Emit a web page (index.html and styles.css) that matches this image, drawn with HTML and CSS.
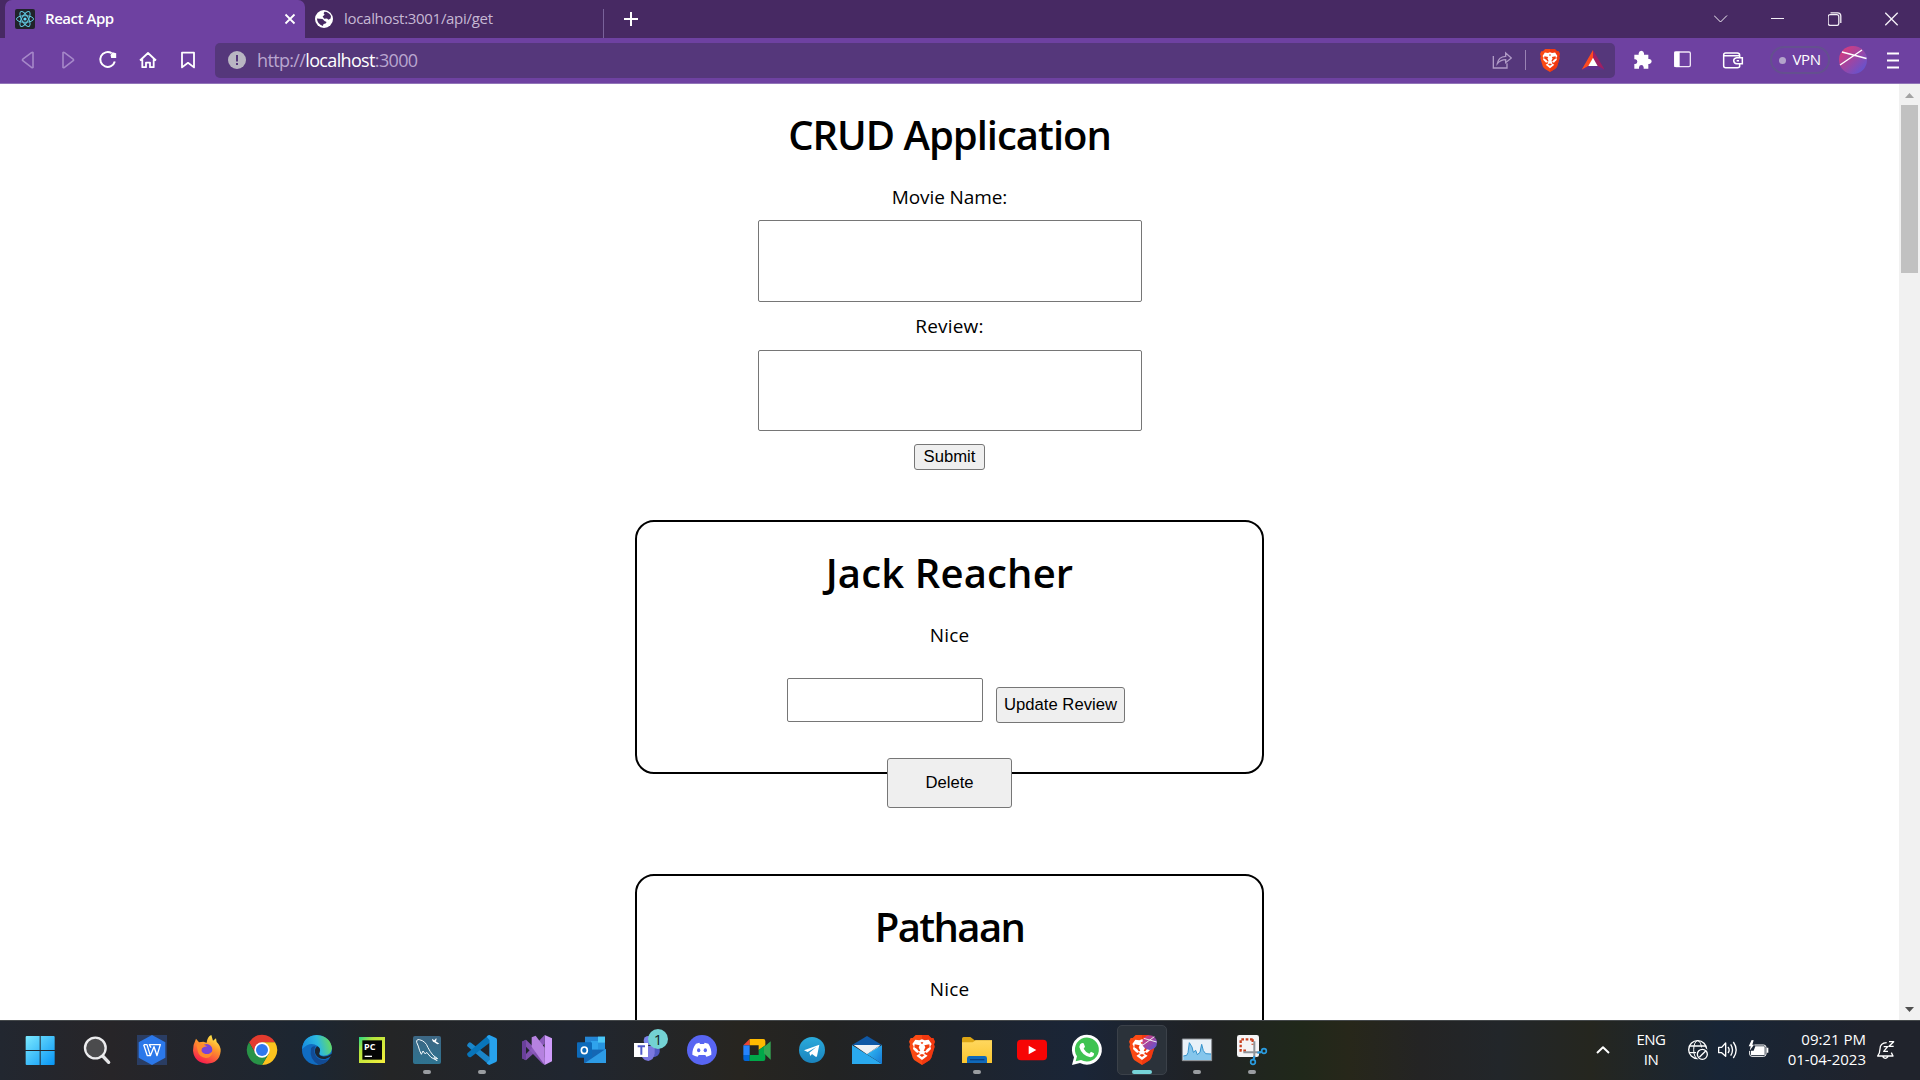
FILE: index.html
```html
<!DOCTYPE html>
<html lang="en">
<head>
<meta charset="utf-8">
<title>React App</title>
<link rel="stylesheet" href="styles.css">
</head>
<body>
<svg width="0" height="0" class="defs" aria-hidden="true">
  <defs>
    <symbol id="lion" viewBox="0 0 78 90">
      <path d="M20 0H58L67 9L73 9L78 20L75 28L77 35L67 68Q64 75 57 79L39 90L21 79Q14 75 11 68L1 35L3 28L0 20L5 9L11 9Z" fill="#fb4a14"/>
      <path d="M39 0H58L67 9L73 9L78 20L75 28L77 35L67 68Q64 75 57 79L39 90Z" fill="#ea2a0c" opacity=".55"/>
      <path d="M19 14L31 16L39 13L47 16L59 14L68 27L64 34L66 42L57 51L55 55L48 51L46 56L56 62L39 75L22 62L32 56L30 51L23 55L21 51L12 42L14 34L10 27Z" fill="#fff"/>
      <path d="M17 28L32 31L29 37L34 48L29 49L24 42L16 37ZM61 28L46 31L49 37L44 48L49 49L54 42L62 37ZM35 22H43L41 26H37ZM31 60L39 57L47 60L39 66ZM22 51L27 56L21 62ZM56 51L51 56L57 62Z" fill="#f23f10"/>
    </symbol>
    <linearGradient id="win" x1="0" y1="0" x2="1" y2="1"><stop offset="0" stop-color="#7be9ff"/><stop offset="1" stop-color="#0795f5"/></linearGradient>
    <linearGradient id="fox" x1=".8" y1="0" x2=".3" y2="1"><stop offset="0" stop-color="#fff44f"/><stop offset=".4" stop-color="#ff9a2b"/><stop offset="1" stop-color="#f7174e"/></linearGradient>
    <linearGradient id="edge" x1="0" y1=".6" x2="1" y2=".4"><stop offset="0" stop-color="#168be0"/><stop offset=".55" stop-color="#2cb8df"/><stop offset="1" stop-color="#69dc5a"/></linearGradient>
    <linearGradient id="pc" x1="0" y1="0" x2="1" y2="1"><stop offset="0" stop-color="#23d789"/><stop offset=".3" stop-color="#b6e53c"/><stop offset="1" stop-color="#f7ef3d"/></linearGradient>
    <linearGradient id="sql" x1="0" y1="0" x2="0" y2="1"><stop offset="0" stop-color="#3d6784"/><stop offset="1" stop-color="#2f7390"/></linearGradient>
    <linearGradient id="tg" x1="0" y1="0" x2="0" y2="1"><stop offset="0" stop-color="#2aabdc"/><stop offset="1" stop-color="#1a83bd"/></linearGradient>
    <linearGradient id="sky" x1="0" y1="0" x2="1" y2="1"><stop offset="0" stop-color="#36c6fb"/><stop offset="1" stop-color="#1577d3"/></linearGradient>
    <linearGradient id="orb" x1="0" y1="0" x2="1" y2="1"><stop offset="0" stop-color="#e83a72"/><stop offset=".45" stop-color="#a4449f"/><stop offset="1" stop-color="#5158dc"/></linearGradient>
    <linearGradient id="fold" x1="0" y1="0" x2="0" y2="1"><stop offset="0" stop-color="#ffd75e"/><stop offset="1" stop-color="#fbc62f"/></linearGradient>
  </defs>
</svg>

<header class="browser">
  <div class="tabstrip">
    <div class="tab tab-active">
      <svg class="favicon" width="20" height="20" viewBox="0 0 20 20"><rect width="20" height="20" rx="2" fill="#20232a"/><g fill="none" stroke="#61c9e0" stroke-width="1"><ellipse cx="10" cy="10" rx="8.5" ry="3.3"/><ellipse cx="10" cy="10" rx="8.5" ry="3.3" transform="rotate(60 10 10)"/><ellipse cx="10" cy="10" rx="8.5" ry="3.3" transform="rotate(120 10 10)"/></g><circle cx="10" cy="10" r="1.6" fill="#61dafb"/></svg>
      <span class="tab-title">React App</span>
      <svg class="tab-close" width="12" height="12" viewBox="0 0 12 12"><path d="M1.5 1.5L10.5 10.5M10.5 1.5L1.5 10.5" stroke="#fff" stroke-width="1.8"/></svg>
    </div>
    <div class="tab tab-idle">
      <svg class="favicon" width="18" height="18" viewBox="0 0 18 18"><circle cx="9" cy="9" r="9" fill="#fff"/><path d="M9.5 1.8Q14 2 16 6L15.6 8.5L13.5 9.8L12 8.5L9.2 8.8L7.6 6.6L9.6 4.8L8.6 3.2ZM1.9 8.6L7.5 9L9.5 11L11.6 12L10.6 13.6L8.6 14L7.8 16Q2.4 14.4 1.9 8.6Z" fill="#472963"/></svg>
      <span class="tab-title">localhost:3001/api/get</span>
    </div>
    <svg class="new-tab" width="16" height="16" viewBox="0 0 16 16"><path d="M8 1V15M1 8H15" stroke="#fff" stroke-width="2"/></svg>
    <div class="window-controls">
      <svg width="14" height="14" viewBox="0 0 14 14"><path d="M.5 3.5L7 10L13.5 3.5" stroke-width="1"/></svg>
      <svg width="14" height="14" viewBox="0 0 14 14"><path d="M.5 6.5H13.5" stroke-width="1"/></svg>
      <svg width="14" height="14" viewBox="0 0 14 14"><rect x=".6" y="2.7" width="10.7" height="10.7" rx="2"/><path d="M3 .8H10Q13.3.8 13.3 4V11"/></svg>
      <svg width="14" height="14" viewBox="0 0 14 14"><path d="M.8.8L13.2 13.2M13.2.8L.8 13.2"/></svg>
    </div>
  </div>

  <div class="toolbar">
    <nav class="nav-buttons">
      <svg width="20" height="20" viewBox="0 0 20 20" class="dim"><path d="M15 2.5V17.5Q14.5 18 13.5 17.3L4.8 10.6Q4 10 4.8 9.2L13.5 2.7Q14.5 2 15 2.5Z"/></svg>
      <svg width="20" height="20" viewBox="0 0 20 20" class="dim"><path d="M5 2.5V17.5Q5.5 18 6.5 17.3L15.2 10.6Q16 10 15.2 9.2L6.5 2.7Q5.500 2 5 2.500Z"/></svg>
      <svg width="20" height="20" viewBox="0 0 20 20"><path d="M13.600 3.200A7.400 7.400 0 1 0 16.800 11.500" stroke-width="2"/><path d="M14.500 2.200L18.200 3.200V8H13.200L12.500 5Z" fill="#fff" stroke="none"/></svg>
      <svg width="20" height="20" viewBox="0 0 20 20"><path d="M2 10.500L10 3L18 10.500M4.300 9.200V17.200H8V12.600H12V17.200H15.700V9.200" stroke-width="1.800"/></svg>
      <svg width="20" height="20" viewBox="0 0 20 20"><path d="M4 2.600H16V17.400L10 12.800L4 17.400Z" stroke-width="1.800"/></svg>
    </nav>
    <div class="address">
      <svg width="18" height="18" viewBox="0 0 18 18"><circle cx="9" cy="9" r="9" fill="#b9b6c2"/><path d="M9 4V10.500M9 12V14" stroke="#55377b" stroke-width="2"/></svg>
      <span class="url">http://<b>localhost</b>:3000</span>
      <svg class="share" width="20" height="20" viewBox="154 152 60 60"><path d="M158 170V206H199V192M170 193Q173 172 195 171V161L212 176L195 190V181Q180 181 170 193Z" fill="none" stroke="#b09bc6" stroke-width="4"/></svg>
      <span class="divider"></span>
      <svg class="shield" width="20" height="23"><use href="#lion"/></svg>
      <svg class="bat" width="24" height="20" viewBox="423 152 72 60"><path d="M459 152L459 177L446 200L425 211Z" fill="#ff4a1f"/><path d="M459 152L494 211L472 200L459 177Z" fill="#9e1f63"/><path d="M425 211L446 199H472L494 211Z" fill="#662d91" opacity=".75"/><path d="M459 175L473 200H445Z" fill="#fff"/></svg>
    </div>
    <svg class="puzzle" width="20" height="20" viewBox="579 151 60 60"><path d="M583 165H596V161Q597 153 604 153Q611 153 612 161V165H625V178H628Q635 179 635 185Q635 192 628 193H625V207H611V203Q610 196 604 196Q598 196 597 203V207H583V193H586Q592 192 592 186Q592 180 586 179H583Z" fill="#fff"/></svg>
    <svg class="sidebar" width="20" height="20" viewBox="699 152 60 60"><rect x="704" y="158" width="47" height="44" rx="4" fill="none" stroke="#eee4f5" stroke-width="4"/><path d="M703 157H719V203H703Z" fill="#fff"/></svg>
    <svg class="wallet" width="22" height="20" viewBox="846 152 66 60"><path d="M899 173V168Q899 161 892 161H857Q851 161 851 167V199Q851 205 857 205H892Q899 205 899 201V194M852 169H897M907 175H890Q881 176 881 184Q882 193 890 193H907ZM890 184H897" fill="none" stroke="#fff" stroke-width="4.500"/></svg>
    <div class="vpn"><i></i><span>VPN</span></div>
    <svg class="avatar" width="28" height="28" viewBox="0 0 28 28"><circle cx="14" cy="14" r="14" fill="url(#orb)"/><path d="M1 19L23 4M3 6L27.500 12.500" stroke="#fff" stroke-width="1.400"/></svg>
    <svg class="menu" width="12" height="17" viewBox="0 0 12 17"><path d="M0 1.500H12M0 8.500H12M0 15.500H12" stroke="#fff" stroke-width="1.800"/></svg>
  </div>
</header>

<div class="viewport">
  <main class="app">
    <h1 class="app-title">CRUD Application</h1>
    <label class="label-movie" for="movie">Movie Name:</label>
    <input class="field field-movie" id="movie" type="text">
    <label class="label-review" for="review">Review:</label>
    <input class="field field-review" id="review" type="text">
    <button class="submit">Submit</button>

    <section class="card">
      <h1 class="name-jack">Jack Reacher</h1>
      <p>Nice</p>
      <div class="update-row"><input type="text" aria-label="New review"><button>Update Review</button></div>
      <button class="delete">Delete</button>
    </section>
    <section class="card">
      <h1 class="name-pathaan">Pathaan</h1>
      <p>Nice</p>
    </section>
  </main>
  <div class="scrollbar">
    <svg width="9" height="5" viewBox="0 0 9 5"><path d="M4.500 0L9 5H0Z" fill="#a3a3a3"/></svg>
    <div class="thumb"></div>
    <svg width="9" height="5" viewBox="0 0 9 5"><path d="M4.500 5L9 0H0Z" fill="#505050"/></svg>
  </div>
</div>

<footer class="taskbar">
  <div class="apps">
    <div class="slot start"><svg viewBox="76 75 90 90"><path d="M78 81Q78 78 81 78H120V120H78ZM123 78H162Q165 78 165 81V120H123ZM78 123H120V165H81Q78 165 78 162ZM123 123H165V162Q165 165 162 165H123Z" fill="url(#win)"/></svg></div>
    <div class="slot"><svg viewBox="246 75 90 90"><path d="M308 138L326 157" stroke="#e4e4e6" stroke-width="10" stroke-linecap="round"/><circle cx="286" cy="114" r="31" fill="#4b4b4d" stroke="#ececee" stroke-width="7"/></svg></div>
    <div class="slot"><svg viewBox="411 75 90 90"><path d="M411 75H501V165H411Z" fill="#2a3d63"/><path d="M456 75L496 97V143L456 165L416 143V97Z" fill="#2b78ea"/><path d="M431 104H441L451 137L462 110L471 137L481 104H448L453 113M431 104L442 137H451" fill="none" stroke="#fff" stroke-width="4" stroke-linejoin="round"/></svg></div>
    <div class="slot"><svg viewBox="576 75 90 90"><path d="M588 86L597 97L610 95L620 98Q622 80 634 75L639 92L648 85L650 96Q663 108 662 124Q658 160 621 161Q583 158 579 122Q579 103 588 86Z" fill="url(#fox)"/><circle cx="620" cy="119" r="17" fill="#7a43d8"/><path d="M589 103Q600 100 613 105L622 109Q610 111 606 115Q600 128 616 132Q630 134 638 122Q637 142 618 144Q598 141 594 126Z" fill="#ff8a2c"/></svg></div>
    <div class="slot"><svg viewBox="741 75 90 90"><path d="M747 97A45 45 0 0 1 825 97H786L767 131Z" fill="#e33b2e"/><path d="M825 97A45 45 0 0 1 786 165L806 131L786 97Z" fill="#fcc31e"/><path d="M747 97A45 45 0 0 0 786 165L806 131L767 131Z" fill="#289347"/><circle cx="786" cy="120" r="23" fill="#fff"/><circle cx="786" cy="120" r="18" fill="#2f78ee"/></svg></div>
    <div class="slot"><svg viewBox="906 75 90 90"><circle cx="951" cy="120" r="45" fill="#106cc1"/><path d="M906 118Q909 78 950 75Q992 78 996 116Q992 137 970 137Q953 136 959 126Q963 115 953 108Q930 92 906 118Z" fill="url(#edge)"/><path d="M933 115Q927 150 956 164Q976 164 988 147Q960 156 948 139Q939 126 946 109Q937 107 933 115Z" fill="#124b94"/><path d="M951 109Q940 120 948 135Q957 149 976 147Q990 142 998 134L998 130Q981 142 967 139Q954 136 959 126Q964 115 951 109Z" fill="#1c2632"/></svg></div>
    <div class="slot"><svg viewBox="1071 75 90 90"><path d="M1077 81H1155V159H1077Z" fill="url(#pc)"/><path d="M1087 91H1146V149H1087Z" fill="#050505"/><path d="M1094 139H1116" stroke="#fff" stroke-width="4"/><text x="1092" y="119" class="pc-text">PC</text></svg></div>
    <div class="slot running"><svg viewBox="36 75 90 90"><rect x="39" y="78" width="84" height="84" rx="6" fill="url(#sql)"/><path d="M64 133L59 122Q55 107 50 97Q49 87 58 89Q77 93 84 113L91 125Q96 136 113 146L102 143L112 153M64 133L69 123L76 132L80 127Q91 145 110 151" fill="none" stroke="#f5fafc" stroke-width="3"/><path d="M96 86L103 91L109 84Q111 91 107 94L118 101L112 103L103 97Q97 96 96 86Z" fill="#fff"/></svg></div>
    <div class="slot running"><svg viewBox="201 75 90 90"><path d="M203 102Q208 94 213 98L269 142L267 163Q262 162 258 157L202 109Q200 106 203 102Z" fill="#1a86ca"/><path d="M203 137Q208 144 213 141L269 98V76Q263 76 258 82L202 130Q200 134 203 137Z" fill="#0875ba"/><path d="M268 75L288 84Q291 86 291 90V150Q291 154 288 156L268 165Q263 164 260 160L268 150V90L260 80Q263 76 268 75Z" fill="#27a2ed"/></svg></div>
    <div class="slot"><svg viewBox="366 75 90 90"><path d="M366 95L378 89L434 143V165L426 160L378 110V132L389 121L399 132L378 151L366 145Z" fill="#7f50ae"/><path d="M366 95L378 89V151L366 145Z" fill="#69409a"/><path d="M434 75L456 85V154L434 165Z" fill="#cf9bfa"/><path d="M389 121L434 75V101L400 133Z" fill="#8b5abb"/><path d="M395 82L407 77L434 113V165L395 110Z" fill="#b682e0"/></svg></div>
    <div class="slot"><svg viewBox="531 75 90 90"><path d="M555 80H615V130H555Z" fill="#2486d5"/><path d="M573 93H594V119H573Z" fill="#2fa3ec"/><path d="M594 80H615V98H594Z" fill="#4ac8f7"/><path d="M594 99H615V119H594Z" fill="#2694df"/><path d="M552 119H618V159H552Z" fill="#1467b4"/><path d="M618 116V159H555Z" fill="#2d9be5"/><rect x="531" y="97" width="45" height="46" rx="3" fill="#0d6ab9"/><ellipse cx="553" cy="121" rx="9" ry="10" fill="none" stroke="#fff" stroke-width="5"/></svg></div>
    <div class="slot badge-slot"><svg viewBox="696 75 90 90"><circle cx="745" cy="92" r="14" fill="#7b83eb"/><path d="M748 108H779V126Q776 141 758 142Z" fill="#5159c2"/><path d="M725 108H764V130Q762 150 745 153Q732 151 727 143Z" fill="#7b78df"/><path d="M702 99H744V141H702Z" fill="#fff"/><path d="M713 109H735M724 109V134" stroke="#5059c9" stroke-width="6"/></svg><span class="badge">1</span></div>
    <div class="slot"><svg viewBox="861 75 90 90"><circle cx="906" cy="120" r="45" fill="#5865f2"/><path d="M888 101L898 98L900 102H912L914 98L925 101Q935 115 934 134Q926 139 919 140L916 135H896L893 140Q885 139 877 134Q877 114 888 101Z" fill="#fff"/><ellipse cx="896" cy="121" rx="5" ry="6" fill="#5865f2"/><ellipse cx="916" cy="121" rx="5" ry="6" fill="#5865f2"/></svg></div>
    <div class="slot"><svg viewBox="1026 75 90 90"><path d="M1030 106L1049 87V106Z" fill="#ea4335"/><path d="M1049 87H1090Q1096 87 1096 93V106L1076 120V106H1049Z" fill="#ffba00"/><path d="M1030 106H1049V135H1030Z" fill="#2684fc"/><path d="M1030 135H1049V153H1036Q1030 153 1030 147Z" fill="#0066da"/><path d="M1049 135H1076V120L1096 106V147Q1096 153 1090 153H1049Z" fill="#00a849"/><path d="M1092 111L1112 94V149L1092 130Z" fill="#34a853"/></svg></div>
    <div class="slot"><svg viewBox="1191 75 90 90"><circle cx="1236" cy="120" r="39" fill="url(#tg)"/><path d="M1212 121L1258 104L1251 139Q1249 142 1245 139L1236 132L1231 138L1228 128L1249 111L1223 126Z" fill="#fff"/></svg></div>
    <div class="slot"><svg viewBox="96 75 90 90"><path d="M96 105L141 78L186 105Z" fill="#0f58a5"/><path d="M101 105H181L141 133Z" fill="#eef1f5"/><path d="M141 133L181 105L160 132Z" fill="#d9d9dd"/><path d="M96 105L186 162H96Z" fill="#2aa9ee"/><path d="M186 105V162L141 133Z" fill="url(#sky)"/></svg></div>
    <div class="slot"><svg viewBox="261 75 90 90"><use href="#lion" x="267" y="75" width="78" height="90"/></svg></div>
    <div class="slot running"><svg viewBox="426 75 90 90"><path d="M426 86Q426 81 431 81H451L464 91H516V110H426Z" fill="#dca514"/><path d="M426 97H458L467 91H516V159H426Z" fill="url(#fold)"/><path d="M441 159V145Q441 138 448 138H494Q501 138 501 145V159Z" fill="#1069bb"/><path d="M450 149H493" stroke="#083f84" stroke-width="4"/></svg></div>
    <div class="slot"><svg viewBox="591 75 90 90"><rect x="591" y="89" width="90" height="62" rx="12" fill="#f70505"/><path d="M626 107L649 120L626 133Z" fill="#fff"/></svg></div>
    <div class="slot"><svg viewBox="756 75 90 90"><path d="M756 165L762 142A45 45 0 1 1 780 159Z" fill="#fff"/><path d="M767 154L771 139A36 36 0 1 1 783 150Z" fill="#3fc351"/><path d="M786 99L791 100L795 110L791 116Q797 127 808 131L813 125L822 130Q823 140 811 142Q785 136 778 111Q779 101 786 99Z" fill="#fff"/></svg></div>
    <div class="slot active"><svg viewBox="921 75 90 90"><use href="#lion" x="927" y="75" width="78" height="90"/><circle cx="989" cy="98" r="22" fill="url(#orb)"/><path d="M969 105L1003 80M971 85L1010 96" stroke="#eee" stroke-width="3"/></svg></div>
    <div class="slot running"><svg viewBox="1086 75 90 90"><path d="M1087 87H1175V152H1087Z" fill="#e9f1f8" stroke="#8b8f94" stroke-width="3"/><path d="M1090 138L1100 136L1104 128L1108 98L1116 111L1120 127L1127 121L1132 134L1140 127L1145 103L1150 122L1157 131L1173 132V150H1090Z" fill="#85c6ec"/><path d="M1090 138L1100 136L1104 128L1108 98L1116 111L1120 127L1127 121L1132 134L1140 127L1145 103L1150 122L1157 131L1173 132" fill="none" stroke="#3593cc" stroke-width="3"/></svg></div>
    <div class="slot running"><svg viewBox="1251 75 90 90"><rect x="1251" y="75" width="66" height="66" rx="7" fill="#f5f5f6"/><path d="M1298 88H1262V122H1281M1298 88V104" fill="none" stroke="#c8401f" stroke-width="7" stroke-dasharray="8 5"/><path d="M1303 94V145M1270 127H1322" stroke="#8f9499" stroke-width="6"/><circle cx="1332" cy="123" r="7" fill="none" stroke="#2a9ce0" stroke-width="5"/><circle cx="1299" cy="156" r="7" fill="none" stroke="#2a9ce0" stroke-width="5"/><path d="M1312 128L1325 126M1303 138L1301 149" stroke="#2a9ce0" stroke-width="6"/></svg></div>
  </div>
  <div class="tray">
    <svg width="14" height="8" viewBox="0 0 14 8"><path d="M1 7L7 1.300L13 7" stroke-width="2"/></svg>
    <div class="lang"><span>ENG</span><span>IN</span></div>
    <svg class="globe" width="20" height="20" viewBox="384 180 60 60"><circle cx="413" cy="209" r="27" stroke-width="4"/><ellipse cx="413" cy="209" rx="12" ry="27" stroke-width="3"/><path d="M389 198H438M387 218H415" stroke-width="4"/><circle cx="427" cy="222" r="20" fill="#1b2533" stroke="none"/><circle cx="427" cy="223" r="15" stroke-width="4"/><path d="M418 232L437 213" stroke-width="4"/></svg>
    <svg class="speaker" width="20" height="20" viewBox="474 180 60 60"><path d="M476 202H485L497 189V229L485 218H476ZM504 201Q511 210 504 219M512 193Q523 210 512 227M520 186Q537 210 520 234" stroke-width="4"/></svg>
    <svg class="battery" width="21" height="20" viewBox="563 180 63 60"><path d="M582 195H610Q617 195 617 202V222Q617 229 610 229H575Q568 229 568 222V213" stroke-width="3"/><path d="M585 199H613V225H572V212H580ZM619 203H624V218H619ZM574 180L565 199H571L568 212L581 194H576L580 181Z" fill="#fff" stroke="none"/></svg>
    <div class="clock"><span>09:21 PM</span><span>01-04-2023</span></div>
    <svg class="bell" width="18" height="20" viewBox="950 180 54 60"><path d="M979 188Q959 189 959 207L957 219L952 228H998L993 218M967 230Q975 240 983 230" stroke-width="4"/><path d="M970 200H982L970 214H983M986 185H1000L986 199H1000" stroke-width="4"/></svg>
  </div>
</footer>
</body>
</html>
```
FILE: styles.css
```css
* { box-sizing: border-box; }
html, body { height: 100%; }
body {
  margin: 0;
  width: 1920px;
  height: 1080px;
  display: flex;
  flex-direction: column;
  overflow: hidden;
  background: #fff;
  font-family: "Open Sans", "Noto Sans", sans-serif;
}
svg { display: block; flex: none; }
.defs { position: absolute; }

/* Browser chrome */
.browser { flex: none; height: 84px; border-bottom: 1px solid #9175b8; background: #6e41a1; }
.tabstrip { height: 38px; display: flex; align-items: center; background: #472963; padding-left: 5px; }
.tab { height: 38px; display: flex; align-items: center; font-size: 15px; white-space: nowrap; }
.tab-title { padding-bottom: 2px; }
.tab-active { width: 300px; padding: 0 9px 0 10px; background: #6e41a1; border-radius: 7px 7px 0 0; color: #fff; font-weight: 600; }
.tab-active .tab-title { margin-left: 10px; letter-spacing: -0.45px; }
.tab-close { margin-left: auto; }
.tab-idle { width: 299px; height: 29px; margin-top: 9px; padding: 0 0 9px 10px; border-right: 1px solid #79629a; color: #c6b8d4; }
.tab-idle .tab-title { margin-left: 11px; letter-spacing: -0.3px; }
.new-tab { margin-left: 19px; }
.window-controls { margin-left: auto; display: flex; }
.window-controls svg { box-sizing: content-box; padding: 0 21.5px; fill: none; stroke: #f3eff6; stroke-width: 1.3; }

.toolbar { height: 45px; display: flex; align-items: center; padding: 0 21px 1px 18px; }
.nav-buttons { display: flex; gap: 20px; }
.nav-buttons svg { fill: none; stroke: #fff; stroke-width: 1.6; stroke-linejoin: round; }
.nav-buttons .dim { stroke: #a688c9; }
.address { width: 1400px; height: 35px; margin-left: 17px; padding: 0 10px 0 13px; display: flex; align-items: center; background: #55377b; border-radius: 5px; }
.url { margin-left: 11px; font-size: 18px; letter-spacing: -0.65px; color: #b9a6cf; }
.url b { font-weight: 400; color: #fff; }
.share { margin-left: auto; }
.divider { width: 1px; height: 20px; margin: 0 14px 0 13px; background: #9a83b4; }
.bat { margin-left: 21px; }
.puzzle { margin-left: 18px; }
.sidebar { margin-left: 20px; }
.wallet { margin-left: 29px; }
.vpn { width: 60px; height: 28px; margin-left: 26px; display: flex; align-items: center; justify-content: center; gap: 6px; border: 2px solid #64508f; border-radius: 14px; color: #fff; font-size: 15px; line-height: 20px; letter-spacing: -0.4px; }
.vpn span { padding-bottom: 2px; }
.vpn i { width: 7px; height: 7px; border-radius: 50%; background: #b3a4cb; }
.avatar { margin-left: 9px; }
.menu { margin-left: 20px; }

/* Page */
.viewport { flex: none; height: 936px; display: flex; overflow: hidden; }
.app { width: 1899px; display: flex; flex-direction: column; align-items: center; padding-top: 27px; font-family: "Trebuchet MS", "Open Sans", sans-serif; font-size: 19px; line-height: 24px; color: #000; }
.app > *, .card > * { flex: none; }
h1 { margin: 0; font-size: 40px; line-height: 48px; font-weight: 600; white-space: nowrap; }
.app-title { letter-spacing: -1px; }
.name-jack { letter-spacing: 0.15px; }
.name-pathaan { letter-spacing: -1.6px; }
.label-movie { margin-top: 26px; letter-spacing: -0.1px; }
.label-review { margin-top: 12px; letter-spacing: 0.2px; }
input { padding: 0; border: 1px solid #767676; border-radius: 2px; background: #fff; }
.field { width: 384px; }
.field-movie { height: 82px; margin-top: 11px; }
.field-review { height: 81px; margin-top: 12px; }
button { padding: 0; border: 1px solid #767676; border-radius: 3px; background: #efefef; color: #000; font-family: "Liberation Sans", Arial, sans-serif; font-size: 16.67px; line-height: 20px; }
.submit { width: 71px; height: 26px; margin-top: 13px; }
.card { width: 629px; height: 254px; margin-top: 50px; padding-top: 27px; display: flex; flex-direction: column; align-items: center; border: 2px solid #000; border-radius: 19px; }
.card + .card { margin-top: 100px; }
.card p { margin: 26px 0 0; letter-spacing: 0.2px; }
.update-row { display: flex; align-items: flex-end; gap: 13px; margin: 31px 0 0 13px; }
.update-row input { width: 196px; height: 44px; margin-bottom: 1px; }
.update-row button { width: 129px; height: 36px; }
.delete { width: 125px; height: 50px; margin-top: 35px; }
.scrollbar { width: 21px; display: flex; flex-direction: column; align-items: center; padding: 9px 2px 8px; background: #f1f1f1; }
.thumb { width: 17px; height: 168px; margin: 7px 0 auto; background: #c1c1c1; }

/* Taskbar */
.taskbar {
  flex: none; height: 60px; display: flex; justify-content: space-between;
  border-top: 1px solid #44484a; color: #fff;
  background: linear-gradient(90deg, #222730 0, #272528 110px, #1c2632 310px, #242526 390px, #202630 570px, #272520 740px, #222323 830px, #1a2537 1080px, #202225 1200px, #20281a 1300px, #27271a 1350px, #242424 1420px, #22262a 1500px, #25261f 1590px, #182536 1720px, #20232c 1870px);
}
.apps { display: flex; padding-left: 12px; }
.slot { width: 55px; height: 59px; display: flex; flex-direction: column; align-items: center; padding-top: 14px; }
.slot svg { width: 30px; height: 30px; overflow: visible; }
.start { width: 57px; padding-right: 2px; }
.running::after { content: ""; width: 8px; height: 4px; margin-top: 5px; border-radius: 2px; background: #9a9da1; }
.active { width: 50px; height: 50px; margin: 4px 2px 0 3px; padding-top: 10px; border: 1px solid #3b4149; border-radius: 5px; background: #2b323a; }
.active svg { margin-top: -1px; }
.active::after { content: ""; width: 20px; height: 4px; margin-top: 5px; border-radius: 2px; background: #76d3d8; }
.pc-text { font: 700 27px "Open Sans", sans-serif; fill: #fff; }
.badge-slot { position: relative; }
.badge { position: absolute; left: 29px; top: 8px; width: 20px; height: 20px; border-radius: 50%; background: #73d2d3; color: #142326; font-size: 15px; line-height: 20px; text-align: center; }
.tray { display: flex; align-items: center; padding: 0 25px 2px 0; font-size: 15px; line-height: 20px; }
.tray svg { fill: none; stroke: #fff; stroke-linejoin: round; }
.lang, .clock { display: flex; flex-direction: column; padding-bottom: 2px; }
.lang { width: 30px; margin-left: 26px; align-items: center; letter-spacing: -0.5px; }
.globe { margin-left: 22px; }
.speaker { margin-left: 10px; }
.battery { margin-left: 10px; }
.clock { width: 80px; margin-left: 17px; align-items: flex-end; letter-spacing: 0; white-space: nowrap; }
.bell { margin-left: 11px; }
```
